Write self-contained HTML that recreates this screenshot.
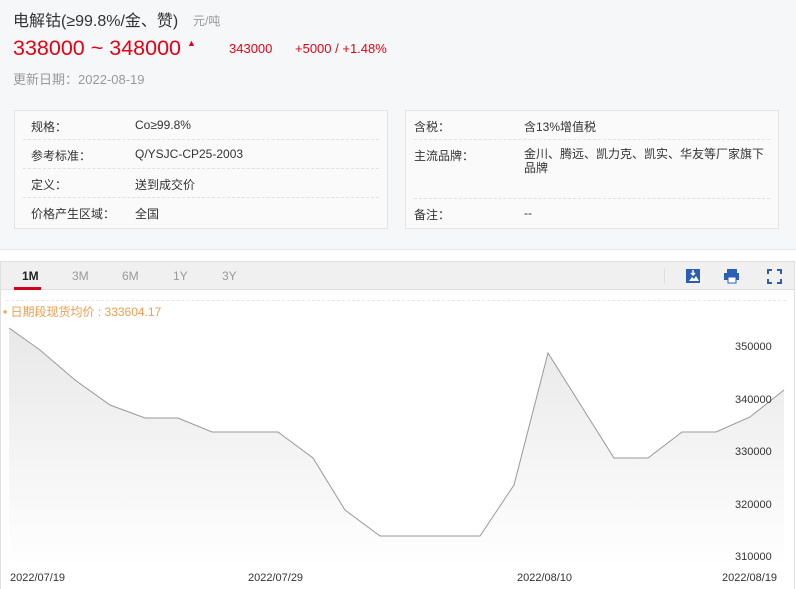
<!DOCTYPE html>
<html><head><meta charset="utf-8"><style>
*{margin:0;padding:0;box-sizing:border-box}
body{width:796px;height:589px;background:#fff;font-family:"Liberation Sans","Noto Sans CJK SC",sans-serif;position:relative;overflow:hidden;font-size:12px;color:#333}
.top{position:absolute;left:0;top:0;width:796px;height:250px;background:#f6f7f9;border-bottom:1px solid #e6e6e6}
.abs{position:absolute;white-space:nowrap}
.box{position:absolute;top:110px;height:119px;background:#fafafb;border:1px solid #e4e4e4}
.row{position:absolute;left:8px;right:8px;border-bottom:1px dashed #e0e0e0;height:29px}
.row span{position:absolute;top:7px;font-size:12px;color:#333}
</style></head><body>
<div class="top"></div>
<div class="abs" style="left:13px;top:7px;font-size:16px;color:#333">电解钴(≥99.8%/金、赞)</div>
<div class="abs" style="left:193px;top:12px;font-size:12px;color:#999">元/吨</div>
<div class="abs" style="left:13px;top:36px;font-size:21.5px;color:#e60012">338000 ~ 348000</div>
<div class="abs" style="left:187px;top:38px;font-size:9px;color:#e60012">▲</div>
<div class="abs" style="left:229px;top:41px;font-size:13px;color:#e60012">343000</div>
<div class="abs" style="left:295px;top:41px;font-size:13px;color:#e60012">+5000 / +1.48%</div>
<div class="abs" style="left:13px;top:69px;font-size:13px;color:#999">更新日期：2022-08-19</div>

<div class="box" style="left:14px;width:374px">
<div class="row" style="top:0"><span style="left:8px">规格：</span><span style="left:112px">Co≥99.8%</span></div>
<div class="row" style="top:29px"><span style="left:8px">参考标准：</span><span style="left:112px">Q/YSJC-CP25-2003</span></div>
<div class="row" style="top:58px"><span style="left:8px">定义：</span><span style="left:112px">送到成交价</span></div>
<div class="row" style="top:87px;border:none"><span style="left:8px">价格产生区域：</span><span style="left:112px">全国</span></div>
</div>
<div class="box" style="left:405px;width:374px">
<div class="row" style="top:0"><span style="left:0">含税：</span><span style="left:110px">含13%增值税</span></div>
<div class="row" style="top:29px;height:59px"><span style="left:0">主流品牌：</span><span style="left:110px;line-height:14px;white-space:normal;width:250px">金川、腾远、凯力克、凯实、华友等厂家旗下品牌</span></div>
<div class="row" style="top:88px;border:none"><span style="left:0">备注：</span><span style="left:110px">--</span></div>
</div>

<div class="abs" style="left:0;top:261px;width:795px;height:328px;border:1px solid #e0e0e0;border-bottom:none"></div>
<div class="abs" style="left:1px;top:262px;width:793px;height:28px;background:#f0f0f0;border-bottom:1px solid #e0e0e0"></div>
<div class="abs" style="left:22px;top:269px;font-size:12px;font-weight:bold;color:#222">1M</div>
<div class="abs" style="left:14px;top:287px;width:27px;height:3px;background:#d0021b"></div>
<div class="abs" style="left:72px;top:269px;color:#999">3M</div>
<div class="abs" style="left:122px;top:269px;color:#999">6M</div>
<div class="abs" style="left:173px;top:269px;color:#999">1Y</div>
<div class="abs" style="left:222px;top:269px;color:#999">3Y</div>
<div class="abs" style="left:664px;top:268px;width:1px;height:16px;background:#ddd"></div>
<svg class="abs" style="left:680px;top:265px" width="106" height="22">
<rect x="6" y="4" width="14" height="14" fill="#2b5fb4"/><path d="M9 16l3-4 2 2 2-3 3 5z" fill="#fff"/><path d="M13 5v5M11 8l2 2 2-2" stroke="#fff" stroke-width="1.5" fill="none"/>
<rect x="47" y="4" width="10" height="4" fill="#2b5fb4"/><rect x="44" y="8" width="15" height="7" fill="#2b5fb4"/><rect x="48" y="12" width="8" height="6" fill="#fff" stroke="#2b5fb4"/>
<path d="M88 9V5h4M97 5h4v4M101 14v4h-4M92 18h-4v-4" stroke="#2b5fb4" stroke-width="2" fill="none"/>
</svg>
<div class="abs" style="left:6px;top:300px;width:780px;border-top:1px dashed #e6e6e6"></div>
<div class="abs" style="left:3px;top:303px;font-size:12px;color:#f39c4b">• 日期段现货均价 : 333604.17</div>
<svg class="abs" style="left:0;top:290px" width="796" height="299">
<defs><linearGradient id="g" x1="0" y1="0" x2="0" y2="1"><stop offset="0" stop-color="#e8e8e8"/><stop offset="1" stop-color="#fff"/></linearGradient></defs>
<path d="M9 38L40 60L75 90L110 115L145 128L178 128L212 142L278 142L313 168L345 220L380 246L480 246L514 195L548 63L614 168L648 168L682 142L716 142L750 127L784 100L784 278L9 278Z" fill="url(#g)"/>
<path d="M9 38L40 60L75 90L110 115L145 128L178 128L212 142L278 142L313 168L345 220L380 246L480 246L514 195L548 63L614 168L648 168L682 142L716 142L750 127L784 100" stroke="#999" fill="none"/>
<g font-size="11" fill="#333" font-family="Liberation Sans">
<text x="735" y="60">350000</text><text x="735" y="113">340000</text><text x="735" y="165">330000</text><text x="735" y="218">320000</text><text x="735" y="270">310000</text>
<text x="10" y="291">2022/07/19</text><text x="248" y="291">2022/07/29</text><text x="517" y="291">2022/08/10</text><text x="722" y="291">2022/08/19</text>
</g></svg>
</body></html>
